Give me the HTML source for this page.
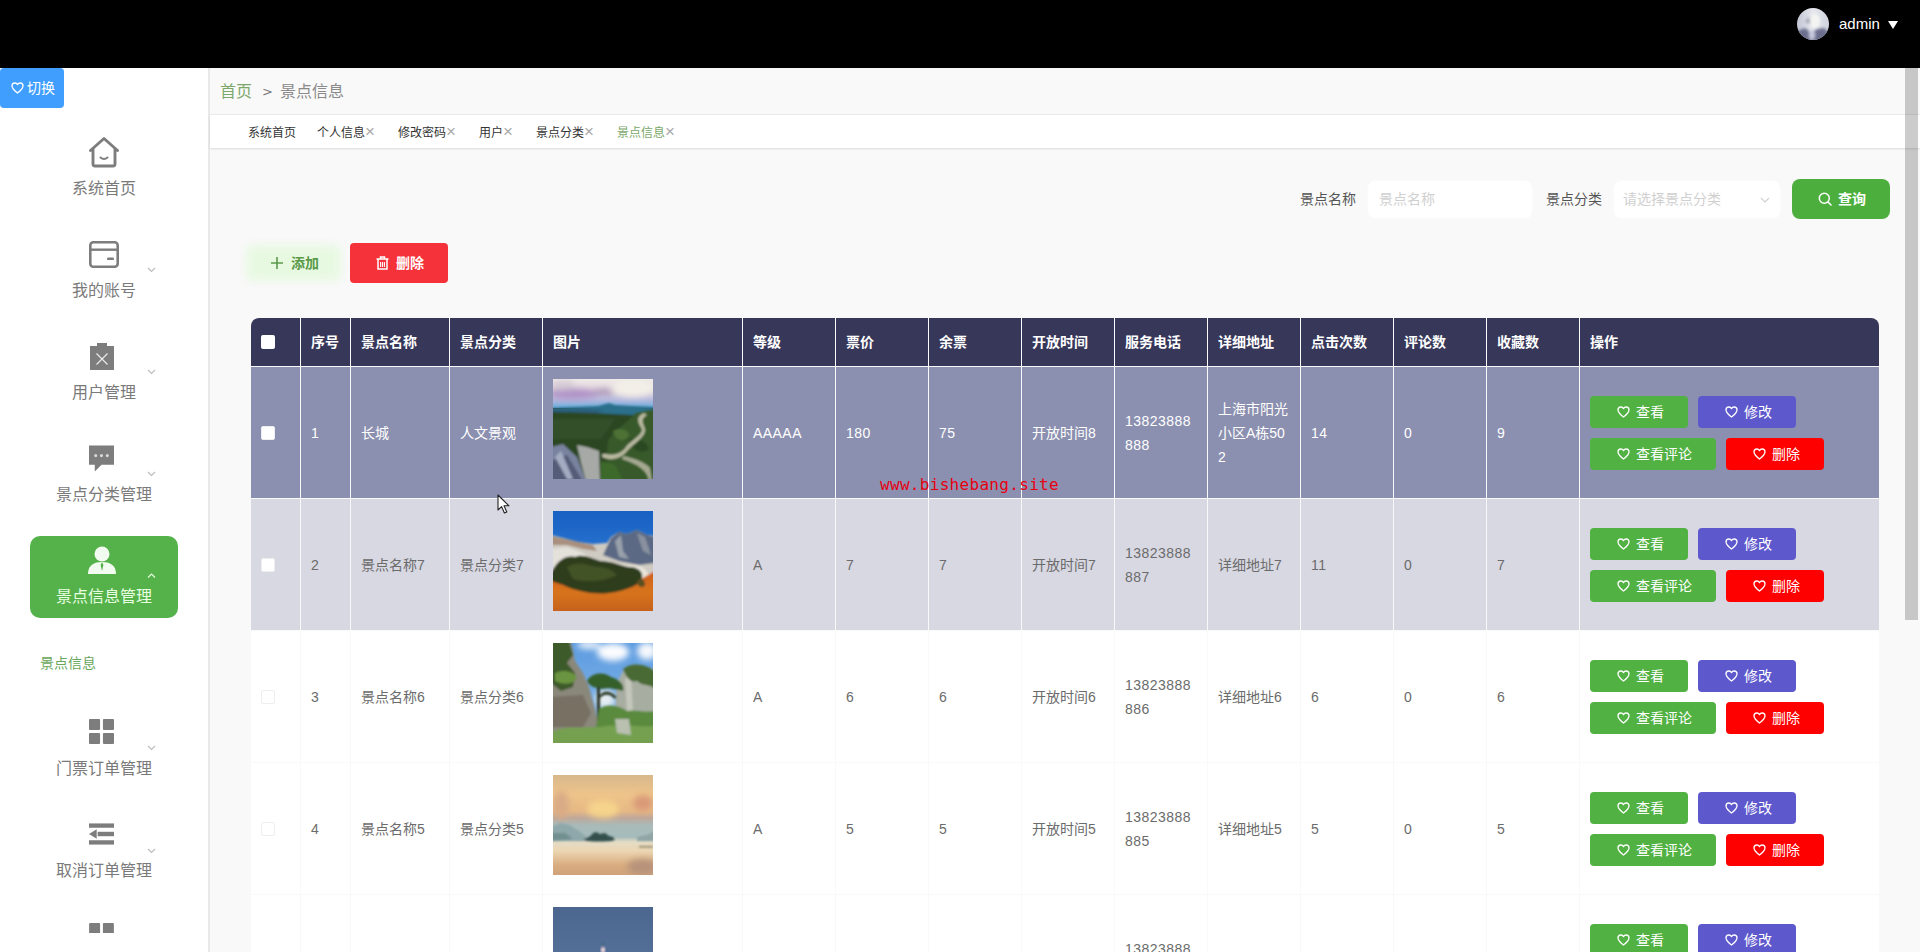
<!DOCTYPE html>
<html lang="zh-CN">
<head>
<meta charset="utf-8">
<title>景点信息</title>
<style>
*{box-sizing:border-box;margin:0;padding:0}
html,body{width:1920px;height:952px;overflow:hidden;background:#f9f9f9;font-family:"Liberation Sans","Noto Sans CJK SC",sans-serif;color:#606266}
div,span,svg{position:absolute}
#top{left:0;top:0;width:1920px;height:68px;background:#000}
#avatar{left:1797px;top:8px}
#admin{left:1839px;top:14px;color:#fff;font-size:15px;line-height:20px}
#caret{left:1888px;top:21px;width:0;height:0;border-left:5.5px solid transparent;border-right:5.5px solid transparent;border-top:8px solid #fff}
#side{left:0;top:68px;width:210px;height:884px;background:#fff;border-right:2px solid #e9e9e9}
#switch{left:0;top:68px;width:64px;height:40px;background:#409eff;border-radius:4px;color:#fff;font-size:14px;line-height:40px}
#switch span{left:27px;top:0}
#switch svg{left:11px;top:14px;color:#fff}
.mt{left:0;width:208px;text-align:center;font-size:16px;color:#7a7a7a;line-height:22px;white-space:nowrap}
.chev{left:147px}
#act{left:30px;top:536px;width:148px;height:82px;border-radius:10px;background:#55b24a}
#bc{left:210px;top:68px;width:1710px;height:47px;background:#f9f9f9;border-bottom:1px solid #ececec}
#bc span{top:13px;line-height:22px;font-size:16px;white-space:nowrap}
#tabs{left:210px;top:115px;width:1710px;height:33px;background:#fff;box-shadow:0 1px 2px rgba(0,0,0,.12);font-size:12px;color:#333}
#tabs span{top:1px;line-height:34px;white-space:nowrap}
#tabs i{font-style:normal;color:#aaa;font-size:17px;margin-left:0;line-height:10px}
#sb{left:1905px;top:68px;width:13px;height:552px;background:rgba(0,0,0,.2)}
.lbl{top:189px;font-size:14px;color:#555;line-height:20px;white-space:nowrap}
.inp{top:180px;height:39px;background:#fff;border-radius:8px;border:1px solid #fbfbfb;font-size:14px;color:#d0d0d0;line-height:37px;padding-left:11px;white-space:nowrap}
.btn{border-radius:4px;color:#fff;font-size:13px;white-space:nowrap}
.btn span{top:0}
#tb{left:251px;top:318px;width:1628px;height:640px}
.c{overflow:hidden}
.th{top:0;height:48px;background:#37375a;color:#fff;font-weight:bold;font-size:14px;line-height:48px;padding-left:10px;white-space:nowrap}
.td{height:131px;padding-left:10px;font-size:14px;line-height:24px;color:#6b6b6b;background:#fff;display:flex;align-items:center}
.td>span{position:static;display:block}
.r1{background:#8c90b0;color:#fff}
.r2{background:#d8d8e2}
.pic{position:static;display:block;margin-top:-7px;flex:none}
.n{letter-spacing:.45px}
.cb{position:static;display:block;width:14px;height:14px;border:1px solid #eee;border-radius:2px;background:#fff;margin-left:0}
.ob{height:32px;border-radius:4px;color:#fff;font-size:14px;line-height:32px;white-space:nowrap}
.ob svg{top:10px}
.ob span{top:0}
.g{background:#51b142}.b{background:#5d58cc}.r{background:#ff0000}
#wm{left:880px;top:474px;font-family:"DejaVu Sans Mono","Liberation Mono",monospace;font-size:16px;color:#e60012;line-height:22px;letter-spacing:0.31px;white-space:nowrap}
</style>
</head>
<body>
<div id="top"><svg id="avatar" width="32" height="32" viewBox="0 0 32 32"><defs><clipPath id="avc"><circle cx="16" cy="16" r="16"/></clipPath><filter id="avb"><feGaussianBlur stdDeviation="1.6"/></filter><linearGradient id="avg" x1="0" y1="0" x2="1" y2="0"><stop offset="0" stop-color="#c3c6d4"/><stop offset=".5" stop-color="#e6e8ee"/><stop offset="1" stop-color="#d0d3de"/></linearGradient></defs><g clip-path="url(#avc)"><rect width="32" height="32" fill="url(#avg)"/><g filter="url(#avb)"><path d="M-2 24 L8 20 L14 25 L20 21 L27 20 L34 26 V34 H-2 Z" fill="#6c6e8e"/><path d="M8 14 L12 9 L14 16 Z" fill="#9a9cae"/><ellipse cx="18" cy="13" rx="5" ry="7" fill="#f4f5f2"/><ellipse cx="15" cy="27" rx="3" ry="5" fill="#c9cbe0"/></g></g></svg><div id="admin">admin</div><div id="caret"></div></div>
<div id="side"></div>
<div id="switch"><svg class="ht" width="13" height="12" viewBox="0 0 13 12"><path d="M6.5 11 C3 8.3 1 6.4 1 4 C1 2.3 2.3 1 3.9 1 C5 1 6 1.6 6.5 2.6 C7 1.6 8 1 9.1 1 C10.7 1 12 2.3 12 4 C12 6.4 10 8.3 6.5 11 Z" fill="none" stroke="currentColor" stroke-width="1.3" stroke-linejoin="round"/></svg><span>切换</span></div>
<div id="act"></div>
<svg style="left:88px;top:136px" width="32" height="32" viewBox="0 0 32 32"><path d="M2.5 14.5 L16 2.5 L29.5 14.5 M5 13 V28 a2 2 0 0 0 2 2 H25 a2 2 0 0 0 2-2 V13" fill="none" stroke="#7d7d7d" stroke-width="2.9" stroke-linejoin="round" stroke-linecap="round"/><path d="M12.5 21.5 q3.5 3 7 0" fill="none" stroke="#7d7d7d" stroke-width="2" stroke-linecap="round"/></svg>
<div class="mt" style="top:178px">系统首页</div>
<svg style="left:89px;top:241px" width="30" height="27" viewBox="0 0 30 27"><rect x="1.3" y="1.3" width="27.4" height="24.4" rx="3" fill="none" stroke="#7d7d7d" stroke-width="2.6"/><rect x="1.3" y="7.5" width="27.4" height="2.4" fill="#7d7d7d"/><rect x="18" y="16.5" width="7" height="2.6" rx="1.2" fill="#7d7d7d"/></svg>
<div class="mt" style="top:280px">我的账号</div>
<svg class="chev" style="top:267px" width="9" height="6" viewBox="0 0 9 6"><path d="M1 1 L4.5 4.5 L8 1" fill="none" stroke="#bbb" stroke-width="1.1"/></svg>
<svg style="left:90px;top:342px" width="24" height="28" viewBox="0 0 24 28"><path d="M0 4 H7 V1 H17 V4 H24 V28 H0 Z" fill="#7d7d7d"/><path d="M6.5 11.5 L17.5 22.5 M17.5 11.5 L6.5 22.5" stroke="#eee" stroke-width="1.1"/></svg>
<div class="mt" style="top:382px">用户管理</div>
<svg class="chev" style="top:369px" width="9" height="6" viewBox="0 0 9 6"><path d="M1 1 L4.5 4.5 L8 1" fill="none" stroke="#bbb" stroke-width="1.1"/></svg>
<svg style="left:89px;top:445px" width="25" height="27" viewBox="0 0 26 27"><path d="M0 0 H26 V20 H13 L6 27 V20 H0 Z" fill="#7d7d7d"/><circle cx="7" cy="10.5" r="1.6" fill="#d8d8d8"/><circle cx="13" cy="10.5" r="1.6" fill="#d8d8d8"/><circle cx="19" cy="10.5" r="1.6" fill="#d8d8d8"/></svg>
<div class="mt" style="top:484px">景点分类管理</div>
<svg class="chev" style="top:471px" width="9" height="6" viewBox="0 0 9 6"><path d="M1 1 L4.5 4.5 L8 1" fill="none" stroke="#bbb" stroke-width="1.1"/></svg>
<svg style="left:88px;top:546px" width="28" height="28" viewBox="0 0 28 28"><circle cx="14" cy="8" r="7.5" fill="#f2fbef"/><path d="M0 28 C0 19 6 16 14 16 C22 16 28 19 28 28 Z" fill="#f2fbef"/><path d="M14 16 L12.6 19 L14 25 L15.4 19 Z" fill="#55b24a"/></svg>
<div class="mt" style="top:586px;color:#e8ffe2">景点信息管理</div>
<svg style="left:89px;top:719px" width="25" height="25" viewBox="0 0 26 26"><rect x="0" y="0" width="11.5" height="11.5" rx="1" fill="#7d7d7d"/><rect x="14.5" y="0" width="11.5" height="11.5" rx="1" fill="#7d7d7d"/><rect x="0" y="14.5" width="11.5" height="11.5" rx="1" fill="#7d7d7d"/><rect x="14.5" y="14.5" width="11.5" height="11.5" rx="1" fill="#7d7d7d"/></svg>
<div class="mt" style="top:758px">门票订单管理</div>
<svg class="chev" style="top:745px" width="9" height="6" viewBox="0 0 9 6"><path d="M1 1 L4.5 4.5 L8 1" fill="none" stroke="#bbb" stroke-width="1.1"/></svg>
<svg style="left:89px;top:823px" width="25" height="22" viewBox="0 0 26 22"><rect x="0" y="0" width="26" height="4.5" fill="#7d7d7d"/><rect x="0" y="17.5" width="26" height="4.5" fill="#7d7d7d"/><rect x="9" y="8.7" width="17" height="4.6" fill="#7d7d7d"/><path d="M0 11 L8 6 V16 Z" fill="#7d7d7d"/></svg>
<div class="mt" style="top:860px">取消订单管理</div>
<svg class="chev" style="top:848px" width="9" height="6" viewBox="0 0 9 6"><path d="M1 1 L4.5 4.5 L8 1" fill="none" stroke="#bbb" stroke-width="1.1"/></svg>
<svg style="left:89px;top:923px" width="25" height="10" viewBox="0 0 26 10.5"><rect x="0" y="0" width="11.5" height="11.5" rx="1" fill="#7d7d7d"/><rect x="14.5" y="0" width="11.5" height="11.5" rx="1" fill="#7d7d7d"/><rect x="0" y="14.5" width="11.5" height="11.5" rx="1" fill="#7d7d7d"/><rect x="14.5" y="14.5" width="11.5" height="11.5" rx="1" fill="#7d7d7d"/></svg>
<svg class="chev" style="top:573px" width="9" height="6" viewBox="0 0 9 6"><path d="M1 4.5 L4.5 1 L8 4.5" fill="none" stroke="#e8ffe0" stroke-width="1.1"/></svg>
<div style="left:40px;top:652px;font-size:14px;color:#68a65a;line-height:22px;white-space:nowrap">景点信息</div>
<div id="bc"><span style="left:10px;color:#7ba86a">首页</span><span style="left:52px;color:#777;font-size:13px;font-family:'DejaVu Sans',sans-serif">&gt;</span><span style="left:70px;color:#8a8a8a">景点信息</span></div>
<div id="tabs"><span style="left:38px">系统首页</span><span style="left:107px">个人信息<i>×</i></span><span style="left:188px">修改密码<i>×</i></span><span style="left:269px">用户<i>×</i></span><span style="left:326px">景点分类<i>×</i></span><span style="left:407px;color:#7ba86a">景点信息<i>×</i></span></div>
<div id="sb"></div>
<div class="lbl" style="left:1300px">景点名称</div>
<div class="inp" style="left:1367px;width:166px">景点名称</div>
<div class="lbl" style="left:1546px">景点分类</div>
<div class="inp" style="left:1613px;width:168px;padding-left:9px">请选择景点分类<svg style="left:146px;top:16px" width="10" height="6" viewBox="0 0 10 6"><path d="M1 1 L5 5 L9 1" fill="none" stroke="#d0d0d0" stroke-width="1.1"/></svg></div>
<div class="btn" style="left:1792px;top:179px;width:98px;height:40px;background:#4cae3c;border-radius:8px;line-height:40px"><svg style="left:26px;top:13px" width="14" height="14" viewBox="0 0 14 14"><circle cx="6.3" cy="6.3" r="5" fill="none" stroke="#fff" stroke-width="1.5"/><path d="M10 10 L13 13" stroke="#fff" stroke-width="1.6" stroke-linecap="round"/></svg><span style="left:46px;font-size:14px;font-weight:bold">查询</span></div>
<div style="left:246px;top:245px;width:95px;height:36px;background:#e8f9e2;border-radius:6px;filter:blur(4px)"></div>
<div class="btn" style="left:243px;top:243px;width:97px;height:40px;color:#5a9a4a;line-height:40px"><svg style="left:27px;top:13px" width="14" height="14" viewBox="0 0 14 14"><path d="M7 1 V13 M1 7 H13" stroke="#5a9a4a" stroke-width="1.6"/></svg><span style="left:48px;font-weight:bold;font-size:14px">添加</span></div>
<div class="btn" style="left:350px;top:243px;width:98px;height:40px;background:#f5313a;line-height:40px"><svg style="left:26px;top:13px" width="13" height="14" viewBox="0 0 13 14"><path d="M0.5 3 H12.5 M4.5 3 V1 H8.5 V3 M2 3 V13 H11 V3" fill="none" stroke="#fff" stroke-width="1.5"/><path d="M4.6 6 V11 M6.5 6 V11 M8.4 6 V11" stroke="#fff" stroke-width="1.1"/></svg><span style="left:46px;font-weight:bold;font-size:14px">删除</span></div>
<div id="tb"><div class="th" style="left:0px;width:49px;border-top-left-radius:8px"><div style="left:10px;top:17px;width:14px;height:14px;background:#fff;border-radius:2px"></div></div><div class="th" style="left:50px;width:49px">序号</div><div class="th" style="left:100px;width:98px">景点名称</div><div class="th" style="left:199px;width:92px">景点分类</div><div class="th" style="left:292px;width:199px">图片</div><div class="th" style="left:492px;width:92px">等级</div><div class="th" style="left:585px;width:92px">票价</div><div class="th" style="left:678px;width:92px">余票</div><div class="th" style="left:771px;width:92px">开放时间</div><div class="th" style="left:864px;width:92px">服务电话</div><div class="th" style="left:957px;width:92px">详细地址</div><div class="th" style="left:1050px;width:92px">点击次数</div><div class="th" style="left:1143px;width:92px">评论数</div><div class="th" style="left:1236px;width:92px">收藏数</div><div class="th" style="left:1329px;width:299px;border-top-right-radius:8px">操作</div><div class="td r1" style="left:0px;top:49px;width:49px"><span class="cb"></span></div><div class="td r1" style="left:50px;top:49px;width:49px"><span class="n">1</span></div><div class="td r1" style="left:100px;top:49px;width:98px"><span>长城</span></div><div class="td r1" style="left:199px;top:49px;width:92px"><span>人文景观</span></div><div class="td r1" style="left:292px;top:49px;width:199px"><svg class="pic" width="100" height="100" viewBox="0 0 100 100"><defs><filter id="bl1" x="-10%" y="-10%" width="120%" height="120%"><feGaussianBlur stdDeviation="1.1"/></filter><filter id="bh1" x="-20%" y="-20%" width="140%" height="140%"><feGaussianBlur stdDeviation="3"/></filter><clipPath id="cp1"><rect width="100" height="100"/></clipPath><linearGradient id="s1" x1="0" y1="0" x2="0" y2="1"><stop offset="0" stop-color="#eeeae8"/><stop offset=".4" stop-color="#e0d3dc"/><stop offset=".72" stop-color="#b4b9de"/><stop offset="1" stop-color="#69acdc"/></linearGradient></defs><g clip-path="url(#cp1)"><rect width="100" height="100" fill="#284222"/><rect width="100" height="29" fill="url(#s1)"/><g filter="url(#bh1)"><ellipse cx="20" cy="15" rx="26" ry="5" fill="#ad8fc6"/><ellipse cx="52" cy="13" rx="12" ry="2.5" fill="#9f88b0"/><ellipse cx="80" cy="9" rx="22" ry="9" fill="#f3efe8"/><ellipse cx="10" cy="6" rx="12" ry="5" fill="#d6ccd6"/></g><g filter="url(#bl1)"><path d="M-2 29 L20 28 L45 27 L56 24 L62 26 L80 27 L102 28 V40 H-2 Z" fill="#2c6f8c"/><path d="M-2 30 L30 30 L50 31 L40 36 L-2 36 Z" fill="#2a5f7c"/><path d="M-2 33 L40 34 L80 36 L102 31 V102 H-2 Z" fill="#2a4624"/><path d="M55 62 C62 50 75 44 82 34 L102 30 V102 H52 Z" fill="#385a2c"/><path d="M-2 40 H62 L48 60 H-2 Z" fill="#31502b"/><path d="M60 52 C66 48 74 50 76 56 C72 64 62 62 60 52 Z" fill="#4e7236"/><path d="M76 60 C84 58 94 62 96 70 C90 76 78 72 76 60 Z" fill="#2a4a22"/><path d="M91 34 C82 38 85 44 89 50 C90 56 77 62 73 68 C69 74 62 77 53 75 C49 74 47 77 51 79 C60 82 69 79 75 71 C81 64 93 58 92 50 C90 44 87 40 94 36 Z" fill="#b9b9a0"/><path d="M70 77 C80 79 92 83 97 89 L99 102 H96 C95 92 85 85 69 80 Z" fill="#a5a990"/><path d="M-2 68 L10 65 L24 78 L33 102 H-2 Z" fill="#79829e"/><path d="M-2 82 L14 76 L30 102 H-2 Z" fill="#555c78"/><path d="M2 78 L8 72 L20 100 L14 100 Z" fill="#a4acc2"/><path d="M24 66 L34 68 L46 72 L47 102 H33 L28 84 Z" fill="#a6a9a5"/><path d="M48 82 L62 86 L70 102 H48 Z" fill="#3d6a2a"/></g></g></svg></div><div class="td r1" style="left:492px;top:49px;width:92px"><span class="n">AAAAA</span></div><div class="td r1" style="left:585px;top:49px;width:92px"><span class="n">180</span></div><div class="td r1" style="left:678px;top:49px;width:92px"><span class="n">75</span></div><div class="td r1" style="left:771px;top:49px;width:92px"><span>开放时间8</span></div><div class="td r1" style="left:864px;top:49px;width:92px"><span class="n">13823888<br>888</span></div><div class="td r1" style="left:957px;top:49px;width:92px"><span>上海市阳光<br>小区A栋50<br>2</span></div><div class="td r1" style="left:1050px;top:49px;width:92px"><span class="n">14</span></div><div class="td r1" style="left:1143px;top:49px;width:92px"><span class="n">0</span></div><div class="td r1" style="left:1236px;top:49px;width:92px"><span class="n">9</span></div><div class="td r1" style="left:1329px;top:49px;width:299px"><div class="ob g" style="left:10px;top:29px;width:98px"><svg style="left:27px" width="13" height="12" viewBox="0 0 13 12"><path d="M6.5 11 C3 8.3 1 6.4 1 4 C1 2.3 2.3 1 3.9 1 C5 1 6 1.6 6.5 2.6 C7 1.6 8 1 9.1 1 C10.7 1 12 2.3 12 4 C12 6.4 10 8.3 6.5 11 Z" fill="none" stroke="currentColor" stroke-width="1.3" stroke-linejoin="round"/></svg><span style="left:46px">查看</span></div><div class="ob b" style="left:118px;top:29px;width:98px"><svg style="left:27px" width="13" height="12" viewBox="0 0 13 12"><path d="M6.5 11 C3 8.3 1 6.4 1 4 C1 2.3 2.3 1 3.9 1 C5 1 6 1.6 6.5 2.6 C7 1.6 8 1 9.1 1 C10.7 1 12 2.3 12 4 C12 6.4 10 8.3 6.5 11 Z" fill="none" stroke="currentColor" stroke-width="1.3" stroke-linejoin="round"/></svg><span style="left:46px">修改</span></div><div class="ob g" style="left:10px;top:71px;width:126px"><svg style="left:27px" width="13" height="12" viewBox="0 0 13 12"><path d="M6.5 11 C3 8.3 1 6.4 1 4 C1 2.3 2.3 1 3.9 1 C5 1 6 1.6 6.5 2.6 C7 1.6 8 1 9.1 1 C10.7 1 12 2.3 12 4 C12 6.4 10 8.3 6.5 11 Z" fill="none" stroke="currentColor" stroke-width="1.3" stroke-linejoin="round"/></svg><span style="left:46px">查看评论</span></div><div class="ob r" style="left:146px;top:71px;width:98px"><svg style="left:27px" width="13" height="12" viewBox="0 0 13 12"><path d="M6.5 11 C3 8.3 1 6.4 1 4 C1 2.3 2.3 1 3.9 1 C5 1 6 1.6 6.5 2.6 C7 1.6 8 1 9.1 1 C10.7 1 12 2.3 12 4 C12 6.4 10 8.3 6.5 11 Z" fill="none" stroke="currentColor" stroke-width="1.3" stroke-linejoin="round"/></svg><span style="left:46px">删除</span></div></div><div class="td r2" style="left:0px;top:181px;width:49px"><span class="cb"></span></div><div class="td r2" style="left:50px;top:181px;width:49px"><span class="n">2</span></div><div class="td r2" style="left:100px;top:181px;width:98px"><span>景点名称7</span></div><div class="td r2" style="left:199px;top:181px;width:92px"><span>景点分类7</span></div><div class="td r2" style="left:292px;top:181px;width:199px"><svg class="pic" width="100" height="100" viewBox="0 0 100 100"><defs><filter id="bl2" x="-10%" y="-10%" width="120%" height="120%"><feGaussianBlur stdDeviation="1.1"/></filter><filter id="bh2" x="-20%" y="-20%" width="140%" height="140%"><feGaussianBlur stdDeviation="3"/></filter><clipPath id="cp2"><rect width="100" height="100"/></clipPath><linearGradient id="s2" x1="0" y1="0" x2="0" y2="1"><stop offset="0" stop-color="#1860c2"/><stop offset="1" stop-color="#3d8ce2"/></linearGradient><linearGradient id="o2" x1="0" y1="0" x2="0" y2="1"><stop offset="0" stop-color="#cf5f1c"/><stop offset=".5" stop-color="#d8741f"/><stop offset="1" stop-color="#c4601c"/></linearGradient></defs><g clip-path="url(#cp2)"><rect width="100" height="100" fill="url(#s2)"/><g filter="url(#bl2)"><path d="M-2 24 L10 27 L25 31 L40 33 L54 32 L58 26 L66 21 L74 23 L84 19 L94 24 L102 25 V92 H-2 Z" fill="#cfcbc3"/><path d="M-2 25 L12 28 L30 32 L40 34 L44 40 L30 38 L14 34 L-2 34 Z" fill="#a98f7e"/><path d="M-2 38 L14 36 L30 42 L40 48 L20 52 L8 62 L-2 64 Z" fill="#e4e1da"/><path d="M50 44 L58 27 L66 21 L74 23 L84 19 L94 24 L102 26 V52 L86 54 L66 50 Z" fill="#5b6984"/><path d="M62 30 L68 24 L70 40 L76 48 L66 46 Z" fill="#98a0ac"/><path d="M84 22 L92 26 L98 44 L90 40 Z" fill="#8a92a0"/><path d="M48 46 C56 52 70 54 84 54 C92 56 96 62 98 70 L90 70 C88 62 80 58 64 56 Z" fill="#e8e4da"/><path d="M-2 66 C10 72 22 80 45 81 C66 80 82 72 102 60 V102 H-2 Z" fill="url(#o2)"/><path d="M-2 62 C4 50 12 44 22 46 C30 42 40 48 48 50 C58 50 66 54 76 56 C86 56 92 62 88 70 C82 76 70 80 56 82 C40 84 22 80 10 74 L-2 70 Z" fill="#2f3d1e"/><path d="M14 56 C24 50 34 54 44 56 C54 56 60 60 64 64 C54 70 34 72 20 68 Z" fill="#435326"/><path d="M84 70 C88 66 92 68 92 74 C90 78 84 76 84 70 Z" fill="#5a4f20"/></g></g></svg></div><div class="td r2" style="left:492px;top:181px;width:92px"><span class="n">A</span></div><div class="td r2" style="left:585px;top:181px;width:92px"><span class="n">7</span></div><div class="td r2" style="left:678px;top:181px;width:92px"><span class="n">7</span></div><div class="td r2" style="left:771px;top:181px;width:92px"><span>开放时间7</span></div><div class="td r2" style="left:864px;top:181px;width:92px"><span class="n">13823888<br>887</span></div><div class="td r2" style="left:957px;top:181px;width:92px"><span>详细地址7</span></div><div class="td r2" style="left:1050px;top:181px;width:92px"><span class="n">11</span></div><div class="td r2" style="left:1143px;top:181px;width:92px"><span class="n">0</span></div><div class="td r2" style="left:1236px;top:181px;width:92px"><span class="n">7</span></div><div class="td r2" style="left:1329px;top:181px;width:299px"><div class="ob g" style="left:10px;top:29px;width:98px"><svg style="left:27px" width="13" height="12" viewBox="0 0 13 12"><path d="M6.5 11 C3 8.3 1 6.4 1 4 C1 2.3 2.3 1 3.9 1 C5 1 6 1.6 6.5 2.6 C7 1.6 8 1 9.1 1 C10.7 1 12 2.3 12 4 C12 6.4 10 8.3 6.5 11 Z" fill="none" stroke="currentColor" stroke-width="1.3" stroke-linejoin="round"/></svg><span style="left:46px">查看</span></div><div class="ob b" style="left:118px;top:29px;width:98px"><svg style="left:27px" width="13" height="12" viewBox="0 0 13 12"><path d="M6.5 11 C3 8.3 1 6.4 1 4 C1 2.3 2.3 1 3.9 1 C5 1 6 1.6 6.5 2.6 C7 1.6 8 1 9.1 1 C10.7 1 12 2.3 12 4 C12 6.4 10 8.3 6.5 11 Z" fill="none" stroke="currentColor" stroke-width="1.3" stroke-linejoin="round"/></svg><span style="left:46px">修改</span></div><div class="ob g" style="left:10px;top:71px;width:126px"><svg style="left:27px" width="13" height="12" viewBox="0 0 13 12"><path d="M6.5 11 C3 8.3 1 6.4 1 4 C1 2.3 2.3 1 3.9 1 C5 1 6 1.6 6.5 2.6 C7 1.6 8 1 9.1 1 C10.7 1 12 2.3 12 4 C12 6.4 10 8.3 6.5 11 Z" fill="none" stroke="currentColor" stroke-width="1.3" stroke-linejoin="round"/></svg><span style="left:46px">查看评论</span></div><div class="ob r" style="left:146px;top:71px;width:98px"><svg style="left:27px" width="13" height="12" viewBox="0 0 13 12"><path d="M6.5 11 C3 8.3 1 6.4 1 4 C1 2.3 2.3 1 3.9 1 C5 1 6 1.6 6.5 2.6 C7 1.6 8 1 9.1 1 C10.7 1 12 2.3 12 4 C12 6.4 10 8.3 6.5 11 Z" fill="none" stroke="currentColor" stroke-width="1.3" stroke-linejoin="round"/></svg><span style="left:46px">删除</span></div></div><div class="td" style="left:0px;top:313px;width:49px"><span class="cb"></span></div><div class="td" style="left:50px;top:313px;width:49px"><span class="n">3</span></div><div class="td" style="left:100px;top:313px;width:98px"><span>景点名称6</span></div><div class="td" style="left:199px;top:313px;width:92px"><span>景点分类6</span></div><div class="td" style="left:292px;top:313px;width:199px"><svg class="pic" width="100" height="100" viewBox="0 0 100 100"><defs><filter id="bl3" x="-10%" y="-10%" width="120%" height="120%"><feGaussianBlur stdDeviation="1.1"/></filter><filter id="bh3" x="-20%" y="-20%" width="140%" height="140%"><feGaussianBlur stdDeviation="3"/></filter><clipPath id="cp3"><rect width="100" height="100"/></clipPath><linearGradient id="s3" x1="0" y1="0" x2="0" y2="1"><stop offset="0" stop-color="#5c9be0"/><stop offset="1" stop-color="#8dbcea"/></linearGradient></defs><g clip-path="url(#cp3)"><rect width="100" height="100" fill="url(#s3)"/><g filter="url(#bh3)"><ellipse cx="60" cy="9" rx="16" ry="9" fill="#fbfcfe"/><ellipse cx="36" cy="2" rx="12" ry="4" fill="#eef3fa"/><ellipse cx="94" cy="8" rx="10" ry="9" fill="#f6f8fc"/><ellipse cx="52" cy="56" rx="10" ry="10" fill="#e6edf2"/></g><g filter="url(#bl3)"><path d="M-2 -2 H18 L22 18 L30 30 L36 44 L42 66 L46 84 L40 102 H-2 Z" fill="#8a887a"/><path d="M-2 54 L30 52 L38 70 L30 84 L-2 84 Z" fill="#776f64"/><path d="M-2 -2 H16 L20 12 L14 20 L22 30 L20 44 L8 48 L-2 40 Z" fill="#3e5a2a"/><path d="M2 30 C10 26 20 28 24 34 C22 42 10 42 2 38 Z" fill="#6a9440"/><path d="M64 40 L70 28 L80 22 L90 24 L102 26 V102 H60 Z" fill="#a7ada1"/><path d="M72 36 L78 32 L80 70 L74 70 Z" fill="#c4c8bc"/><path d="M70 26 C80 18 94 22 102 28 V46 C96 40 90 44 84 38 C78 40 74 36 70 26 Z" fill="#4a6a34"/><path d="M34 38 C38 30 50 28 58 34 C66 36 72 42 70 48 C62 46 56 44 50 46 C44 44 38 46 34 38 Z" fill="#35602c"/><path d="M44 44 H47 L47 78 H44 Z" fill="#2a3322"/><path d="M47 52 C52 46 58 48 64 54 L62 56 C57 51 52 50 47 55 Z" fill="#2f3d27"/><path d="M46 66 C54 60 66 62 74 68 C82 66 92 70 102 68 V102 H40 Z" fill="#5a8a3e"/><path d="M-2 90 C10 82 24 86 36 84 C48 86 56 80 66 84 C80 80 90 86 102 82 V102 H-2 Z" fill="#74a050"/><path d="M62 76 L76 76 L78 92 L64 90 Z" fill="#b9c0b0"/></g></g></svg></div><div class="td" style="left:492px;top:313px;width:92px"><span class="n">A</span></div><div class="td" style="left:585px;top:313px;width:92px"><span class="n">6</span></div><div class="td" style="left:678px;top:313px;width:92px"><span class="n">6</span></div><div class="td" style="left:771px;top:313px;width:92px"><span>开放时间6</span></div><div class="td" style="left:864px;top:313px;width:92px"><span class="n">13823888<br>886</span></div><div class="td" style="left:957px;top:313px;width:92px"><span>详细地址6</span></div><div class="td" style="left:1050px;top:313px;width:92px"><span class="n">6</span></div><div class="td" style="left:1143px;top:313px;width:92px"><span class="n">0</span></div><div class="td" style="left:1236px;top:313px;width:92px"><span class="n">6</span></div><div class="td" style="left:1329px;top:313px;width:299px"><div class="ob g" style="left:10px;top:29px;width:98px"><svg style="left:27px" width="13" height="12" viewBox="0 0 13 12"><path d="M6.5 11 C3 8.3 1 6.4 1 4 C1 2.3 2.3 1 3.9 1 C5 1 6 1.6 6.5 2.6 C7 1.6 8 1 9.1 1 C10.7 1 12 2.3 12 4 C12 6.4 10 8.3 6.5 11 Z" fill="none" stroke="currentColor" stroke-width="1.3" stroke-linejoin="round"/></svg><span style="left:46px">查看</span></div><div class="ob b" style="left:118px;top:29px;width:98px"><svg style="left:27px" width="13" height="12" viewBox="0 0 13 12"><path d="M6.5 11 C3 8.3 1 6.4 1 4 C1 2.3 2.3 1 3.9 1 C5 1 6 1.6 6.5 2.6 C7 1.6 8 1 9.1 1 C10.7 1 12 2.3 12 4 C12 6.4 10 8.3 6.5 11 Z" fill="none" stroke="currentColor" stroke-width="1.3" stroke-linejoin="round"/></svg><span style="left:46px">修改</span></div><div class="ob g" style="left:10px;top:71px;width:126px"><svg style="left:27px" width="13" height="12" viewBox="0 0 13 12"><path d="M6.5 11 C3 8.3 1 6.4 1 4 C1 2.3 2.3 1 3.9 1 C5 1 6 1.6 6.5 2.6 C7 1.6 8 1 9.1 1 C10.7 1 12 2.3 12 4 C12 6.4 10 8.3 6.5 11 Z" fill="none" stroke="currentColor" stroke-width="1.3" stroke-linejoin="round"/></svg><span style="left:46px">查看评论</span></div><div class="ob r" style="left:146px;top:71px;width:98px"><svg style="left:27px" width="13" height="12" viewBox="0 0 13 12"><path d="M6.5 11 C3 8.3 1 6.4 1 4 C1 2.3 2.3 1 3.9 1 C5 1 6 1.6 6.5 2.6 C7 1.6 8 1 9.1 1 C10.7 1 12 2.3 12 4 C12 6.4 10 8.3 6.5 11 Z" fill="none" stroke="currentColor" stroke-width="1.3" stroke-linejoin="round"/></svg><span style="left:46px">删除</span></div></div><div class="td" style="left:0px;top:445px;width:49px"><span class="cb"></span></div><div class="td" style="left:50px;top:445px;width:49px"><span class="n">4</span></div><div class="td" style="left:100px;top:445px;width:98px"><span>景点名称5</span></div><div class="td" style="left:199px;top:445px;width:92px"><span>景点分类5</span></div><div class="td" style="left:292px;top:445px;width:199px"><svg class="pic" width="100" height="100" viewBox="0 0 100 100"><defs><filter id="bl4" x="-10%" y="-10%" width="120%" height="120%"><feGaussianBlur stdDeviation="1.1"/></filter><filter id="bh4" x="-20%" y="-20%" width="140%" height="140%"><feGaussianBlur stdDeviation="3"/></filter><clipPath id="cp4"><rect width="100" height="100"/></clipPath><linearGradient id="s4" x1="0" y1="0" x2="0" y2="1"><stop offset="0" stop-color="#d8b88c"/><stop offset=".2" stop-color="#eec48a"/><stop offset=".36" stop-color="#e6b884"/><stop offset=".43" stop-color="#bfa89a"/><stop offset=".5" stop-color="#a9bab8"/><stop offset=".62" stop-color="#a6bcbc"/><stop offset=".67" stop-color="#e4dcc6"/><stop offset=".76" stop-color="#ecd6b2"/><stop offset=".9" stop-color="#d9ad80"/><stop offset="1" stop-color="#cfa27a"/></linearGradient></defs><g clip-path="url(#cp4)"><rect width="100" height="100" fill="url(#s4)"/><g filter="url(#bh4)"><ellipse cx="50" cy="34" rx="16" ry="9" fill="#f6d48c"/><ellipse cx="90" cy="28" rx="10" ry="8" fill="#d99a78"/><ellipse cx="90" cy="92" rx="16" ry="8" fill="#b8937a"/><ellipse cx="8" cy="30" rx="8" ry="14" fill="#d9ab86"/></g><g filter="url(#bl4)"><path d="M-2 52 L8 48 L16 50 L26 56 L34 62 L30 66 H-2 Z" fill="#8ea7aa"/><path d="M-2 58 L12 58 L20 64 L-2 66 Z" fill="#71908f"/><path d="M84 62 L94 60 L102 56 V66 H84 Z" fill="#8fa5a6"/><path d="M30 65 C34 62 38 62 40 58 L44 57 L46 59 L52 58 L56 61 L60 62 L62 65 C56 67 38 67 30 65 Z" fill="#35504e"/><path d="M86 71 H100 V72.5 H86 Z" fill="#8a8266"/></g></g></svg></div><div class="td" style="left:492px;top:445px;width:92px"><span class="n">A</span></div><div class="td" style="left:585px;top:445px;width:92px"><span class="n">5</span></div><div class="td" style="left:678px;top:445px;width:92px"><span class="n">5</span></div><div class="td" style="left:771px;top:445px;width:92px"><span>开放时间5</span></div><div class="td" style="left:864px;top:445px;width:92px"><span class="n">13823888<br>885</span></div><div class="td" style="left:957px;top:445px;width:92px"><span>详细地址5</span></div><div class="td" style="left:1050px;top:445px;width:92px"><span class="n">5</span></div><div class="td" style="left:1143px;top:445px;width:92px"><span class="n">0</span></div><div class="td" style="left:1236px;top:445px;width:92px"><span class="n">5</span></div><div class="td" style="left:1329px;top:445px;width:299px"><div class="ob g" style="left:10px;top:29px;width:98px"><svg style="left:27px" width="13" height="12" viewBox="0 0 13 12"><path d="M6.5 11 C3 8.3 1 6.4 1 4 C1 2.3 2.3 1 3.9 1 C5 1 6 1.6 6.5 2.6 C7 1.6 8 1 9.1 1 C10.7 1 12 2.3 12 4 C12 6.4 10 8.3 6.5 11 Z" fill="none" stroke="currentColor" stroke-width="1.3" stroke-linejoin="round"/></svg><span style="left:46px">查看</span></div><div class="ob b" style="left:118px;top:29px;width:98px"><svg style="left:27px" width="13" height="12" viewBox="0 0 13 12"><path d="M6.5 11 C3 8.3 1 6.4 1 4 C1 2.3 2.3 1 3.9 1 C5 1 6 1.6 6.5 2.6 C7 1.6 8 1 9.1 1 C10.7 1 12 2.3 12 4 C12 6.4 10 8.3 6.5 11 Z" fill="none" stroke="currentColor" stroke-width="1.3" stroke-linejoin="round"/></svg><span style="left:46px">修改</span></div><div class="ob g" style="left:10px;top:71px;width:126px"><svg style="left:27px" width="13" height="12" viewBox="0 0 13 12"><path d="M6.5 11 C3 8.3 1 6.4 1 4 C1 2.3 2.3 1 3.9 1 C5 1 6 1.6 6.5 2.6 C7 1.6 8 1 9.1 1 C10.7 1 12 2.3 12 4 C12 6.4 10 8.3 6.5 11 Z" fill="none" stroke="currentColor" stroke-width="1.3" stroke-linejoin="round"/></svg><span style="left:46px">查看评论</span></div><div class="ob r" style="left:146px;top:71px;width:98px"><svg style="left:27px" width="13" height="12" viewBox="0 0 13 12"><path d="M6.5 11 C3 8.3 1 6.4 1 4 C1 2.3 2.3 1 3.9 1 C5 1 6 1.6 6.5 2.6 C7 1.6 8 1 9.1 1 C10.7 1 12 2.3 12 4 C12 6.4 10 8.3 6.5 11 Z" fill="none" stroke="currentColor" stroke-width="1.3" stroke-linejoin="round"/></svg><span style="left:46px">删除</span></div></div><div class="td" style="left:0px;top:577px;width:49px"><span class="cb"></span></div><div class="td" style="left:50px;top:577px;width:49px"><span class="n">5</span></div><div class="td" style="left:100px;top:577px;width:98px"><span>景点名称4</span></div><div class="td" style="left:199px;top:577px;width:92px"><span>景点分类4</span></div><div class="td" style="left:292px;top:577px;width:199px"><svg class="pic" width="100" height="100" viewBox="0 0 100 100"><defs><filter id="bl5" x="-10%" y="-10%" width="120%" height="120%"><feGaussianBlur stdDeviation="1.1"/></filter><filter id="bh5" x="-20%" y="-20%" width="140%" height="140%"><feGaussianBlur stdDeviation="3"/></filter><clipPath id="cp5"><rect width="100" height="100"/></clipPath><linearGradient id="s5" x1="0" y1="0" x2="0" y2="1"><stop offset="0" stop-color="#4b6790"/><stop offset="1" stop-color="#5d789f"/></linearGradient></defs><g clip-path="url(#cp5)"><rect width="100" height="100" fill="url(#s5)"/><g filter="url(#bl5)"><ellipse cx="50" cy="43" rx="2.2" ry="3" fill="#ead0d8"/><path d="M48 38 L50 35 L52 38 Z" fill="#3f6a78"/></g></g></svg></div><div class="td" style="left:492px;top:577px;width:92px"><span class="n">A</span></div><div class="td" style="left:585px;top:577px;width:92px"><span class="n">4</span></div><div class="td" style="left:678px;top:577px;width:92px"><span class="n">4</span></div><div class="td" style="left:771px;top:577px;width:92px"><span>开放时间4</span></div><div class="td" style="left:864px;top:577px;width:92px"><span class="n">13823888<br>884</span></div><div class="td" style="left:957px;top:577px;width:92px"><span>详细地址4</span></div><div class="td" style="left:1050px;top:577px;width:92px"><span class="n">4</span></div><div class="td" style="left:1143px;top:577px;width:92px"><span class="n">0</span></div><div class="td" style="left:1236px;top:577px;width:92px"><span class="n">4</span></div><div class="td" style="left:1329px;top:577px;width:299px"><div class="ob g" style="left:10px;top:29px;width:98px"><svg style="left:27px" width="13" height="12" viewBox="0 0 13 12"><path d="M6.5 11 C3 8.3 1 6.4 1 4 C1 2.3 2.3 1 3.9 1 C5 1 6 1.6 6.5 2.6 C7 1.6 8 1 9.1 1 C10.7 1 12 2.3 12 4 C12 6.4 10 8.3 6.5 11 Z" fill="none" stroke="currentColor" stroke-width="1.3" stroke-linejoin="round"/></svg><span style="left:46px">查看</span></div><div class="ob b" style="left:118px;top:29px;width:98px"><svg style="left:27px" width="13" height="12" viewBox="0 0 13 12"><path d="M6.5 11 C3 8.3 1 6.4 1 4 C1 2.3 2.3 1 3.9 1 C5 1 6 1.6 6.5 2.6 C7 1.6 8 1 9.1 1 C10.7 1 12 2.3 12 4 C12 6.4 10 8.3 6.5 11 Z" fill="none" stroke="currentColor" stroke-width="1.3" stroke-linejoin="round"/></svg><span style="left:46px">修改</span></div><div class="ob g" style="left:10px;top:71px;width:126px"><svg style="left:27px" width="13" height="12" viewBox="0 0 13 12"><path d="M6.5 11 C3 8.3 1 6.4 1 4 C1 2.3 2.3 1 3.9 1 C5 1 6 1.6 6.5 2.6 C7 1.6 8 1 9.1 1 C10.7 1 12 2.3 12 4 C12 6.4 10 8.3 6.5 11 Z" fill="none" stroke="currentColor" stroke-width="1.3" stroke-linejoin="round"/></svg><span style="left:46px">查看评论</span></div><div class="ob r" style="left:146px;top:71px;width:98px"><svg style="left:27px" width="13" height="12" viewBox="0 0 13 12"><path d="M6.5 11 C3 8.3 1 6.4 1 4 C1 2.3 2.3 1 3.9 1 C5 1 6 1.6 6.5 2.6 C7 1.6 8 1 9.1 1 C10.7 1 12 2.3 12 4 C12 6.4 10 8.3 6.5 11 Z" fill="none" stroke="currentColor" stroke-width="1.3" stroke-linejoin="round"/></svg><span style="left:46px">删除</span></div></div></div>
<div id="wm">www.bishebang.site</div>
<svg style="left:497px;top:494px" width="14" height="20" viewBox="0 0 14 20"><path d="M1 1 V16 L4.6 12.6 L7.4 19 L9.8 18 L7 11.8 H12 Z" fill="#fff" stroke="#222" stroke-width="1.1" stroke-linejoin="round"/></svg>
</body>
</html>
